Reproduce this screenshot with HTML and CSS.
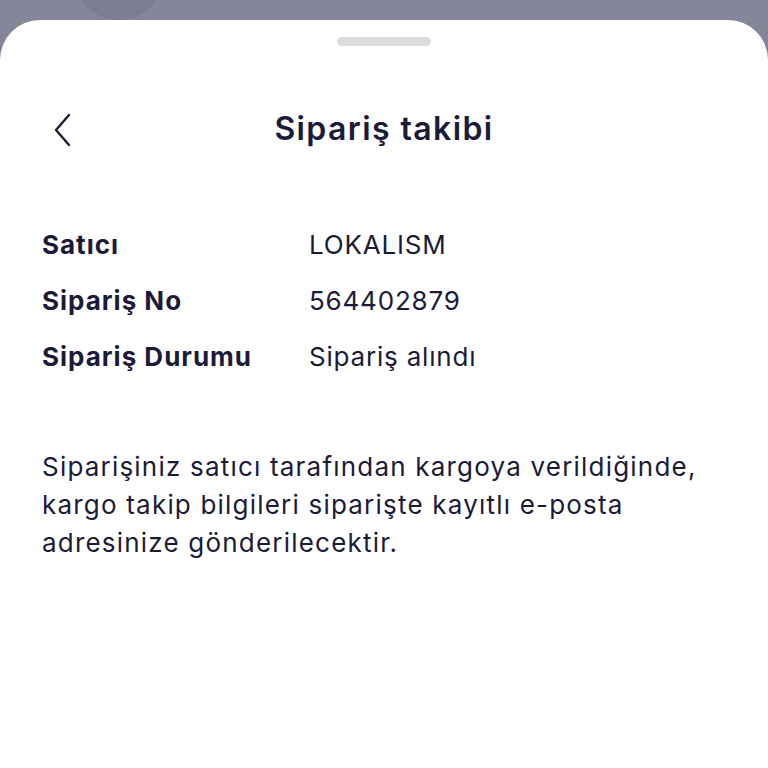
FILE: index.html
```html
<!DOCTYPE html>
<html lang="tr">
<head>
    <meta charset="UTF-8">
    <meta name="viewport" content="width=device-width, initial-scale=1.0">
    <title>Sipariş takibi</title>
    <link rel="stylesheet" href="styles.css">
</head>
<body>
    <div class="backdrop-dot"></div>
    <div class="sheet">
        <div class="handle"></div>

        <!-- Header -->
        <div class="header">
            <button class="back" aria-label="Geri">
                <svg width="20" height="34" viewBox="0 0 20 34">
                    <path d="M16 2 L3 17 L16 32" fill="none" stroke="#1b1b38" stroke-width="2.4" stroke-linecap="round" stroke-linejoin="round"/>
                </svg>
            </button>
            <h1>Sipariş takibi</h1>
        </div>

        <!-- Order info -->
        <div class="info">
            <div class="info-row">
                <span class="label">Satıcı</span>
                <span class="value">LOKALISM</span>
            </div>
            <div class="info-row">
                <span class="label">Sipariş No</span>
                <span class="value">564402879</span>
            </div>
            <div class="info-row">
                <span class="label">Sipariş Durumu</span>
                <span class="value">Sipariş alındı</span>
            </div>
        </div>

        <p class="note">Siparişiniz satıcı tarafından kargoya verildiğinde,<br>kargo takip bilgileri siparişte kayıtlı e-posta<br>adresinize gönderilecektir.</p>
    </div>
</body>
</html>
```

FILE: styles.css
```css
body {
    margin: 0;
    height: 768px;
    overflow: hidden;
    background-color: #85869a;
    font-family: Inter, sans-serif;
    color: #1b1b38;
    position: relative;
}
.backdrop-dot {
    position: absolute;
    left: 74px;
    top: -70px;
    width: 90px;
    height: 90px;
    border-radius: 50%;
    background-color: #7c7d91;
}
.sheet {
    position: relative;
    margin-top: 20px;
    height: 748px;
    background-color: #fff;
    border-radius: 40px 40px 0 0;
    padding: 17px 42px 0;
    box-sizing: border-box;
}
.handle {
    width: 94px;
    height: 9px;
    margin: 0 auto;
    background-color: #dcdcdc;
    border-radius: 5px;
}
.header {
    position: relative;
    margin-top: 62px;
    height: 40px;
    display: flex;
    align-items: center;
    justify-content: center;
}
.back {
    position: absolute;
    left: 11px;
    top: 5px;
    padding: 0;
    border: none;
    background: none;
}
h1 {
    margin: 0;
    font-size: 32px;
    font-weight: 600;
    letter-spacing: 1.4px;
}
.info {
    margin-top: 79px;
    display: flex;
    flex-direction: column;
    gap: 20px;
}
.info-row {
    display: flex;
    font-size: 26px;
    line-height: 36px;
}
.label {
    width: 267px;
    font-weight: 700;
    letter-spacing: 1px;
}
.value {
    font-weight: 400;
    letter-spacing: 0.8px;
}
.note {
    margin: 73px 0 0;
    font-size: 26px;
    line-height: 38px;
    letter-spacing: 1.2px;
}
```
